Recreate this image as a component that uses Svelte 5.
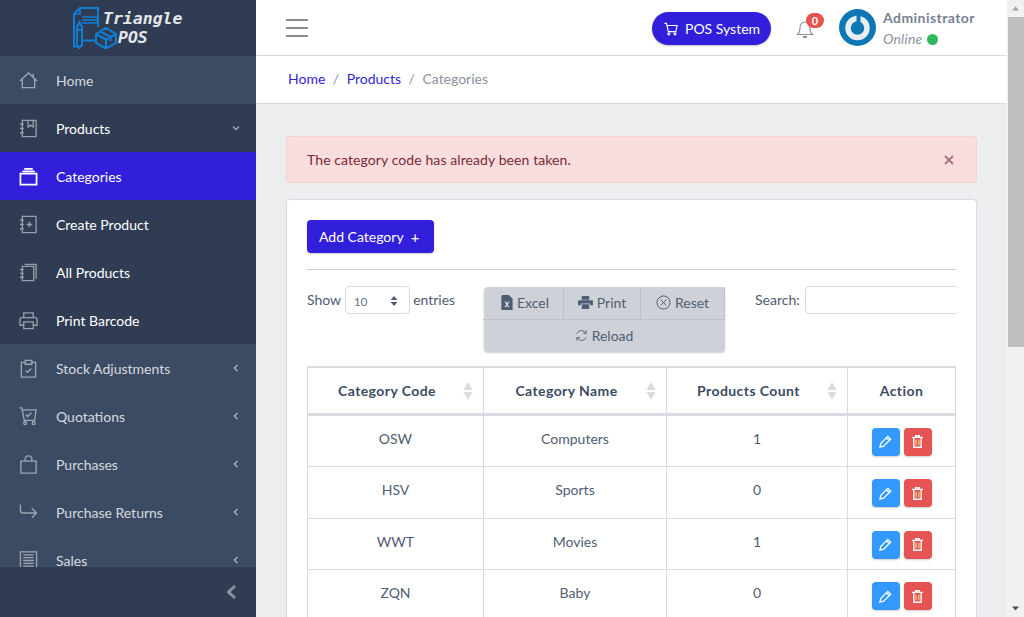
<script>
  const storeItems = [
    { name: "Stock Adjustments", icon: "clipboard" },
    { name: "Quotations", icon: "cart" },
    { name: "Purchases", icon: "bag" },
    { name: "Purchase Returns", icon: "return" },
    { name: "Sales", icon: "sales" },
  ];
  const productItems = [
    { name: "Categories", icon: "tray", active: true },
    { name: "Create Product", icon: "bookPlus" },
    { name: "All Products", icon: "books" },
    { name: "Print Barcode", icon: "print" },
  ];
  const columns = ["Category Code", "Category Name", "Products Count"];
  const rows = [
    { code: "OSW", name: "Computers", count: 1 },
    { code: "HSV", name: "Sports", count: 0 },
    { code: "WWT", name: "Movies", count: 1 },
    { code: "ZQN", name: "Baby", count: 0 },
  ];
</script>

{#snippet navIcon(kind)}
  <svg class="nav-icon" viewBox="0 0 20 20" fill="none" stroke="currentColor" stroke-width="1.400">
    {#if kind === "home"}
      <path d="M1 10.500 10 2l9 8.500M3.500 8.500v9h13v-9M15 3v3" />
    {:else if kind === "book"}
      <path d="M3.500 1.500h14.500v17H3.500zM1 5.500h4M1 10h4M1 14.500h4M9.500 1.500v7l2.700-2 2.800 2v-7" />
    {:else if kind === "tray"}
      <path d="M1.500 7h17v11.500h-17zM3.500 4.500h13M5.500 2h9" stroke-width="1.800" />
    {:else if kind === "bookPlus"}
      <path d="M3.500 1.500h14.500v17H3.500zM1 5.500h4M1 10h4M1 14.500h4M8 10h6M11 7v6" />
    {:else if kind === "books"}
      <path d="M3.500 3.500h12v15h-12zM1 7h4M1 11h4M1 15h4M6 1.500h12v15" />
    {:else if kind === "print"}
      <path d="M5 7V2h10v5M5 15H1V9q0-2 2-2h14q2 0 2 2v6h-4M5 11.500h10V18.500H5z" />
    {:else if kind === "clipboard"}
      <path d="M6 3.500H2.500V19h15V3.500H14M6.500 1.500h7v4h-7zM7 12l2 2 4-4" />
    {:else if kind === "cart"}
      <path d="M0.500 1h2.500L5.500 14h11l1.500-11H4M7 8l2 2 4-4" />
      <circle cx="6.500" cy="17" r="1.500" /><circle cx="15.500" cy="17" r="1.500" />
    {:else if kind === "bag"}
      <path d="M2 6.500h16v12.500H2zM6.500 6.500V4q0-3 3.500-3t3.500 3v2.500" />
    {:else if kind === "return"}
      <path d="M1.500 1.500v6q0 3 3 3h14M13.500 5.500l5 5-5 5" />
    {:else if kind === "sales"}
      <path d="M1.500 1h17v18h-17zM4.500 4h11M4.500 7h11M4.500 10h11M4.500 13h11M4.500 16h11" />
    {/if}
  </svg>
{/snippet}

{#snippet navRow(item)}
  <a class="nav-link" class:active={item.active}>
    {@render navIcon(item.icon)}
    <span>{item.name}</span>
    {#if item.chevron}
      <svg class="chevron" viewBox="0 0 8 8" fill="none" stroke="currentColor" stroke-width="1.600">
        {#if item.chevron === "down"}<path d="M1 2.500 4 5.500 7 2.500" />{:else}<path d="M5.500 1 2.500 4 5.500 7" />{/if}
      </svg>
    {/if}
  </a>
{/snippet}

<div class="shell">
  <aside class="sidebar">
    <div class="brand">
      <svg class="brand-mark" viewBox="0 0 44 42" fill="none" stroke="#0f7fd4" stroke-width="2">
        <path d="M25 20V1H7L1 7v32.500h4M10 33.500h12" />
        <path d="M7 1v6H1M9 10h16M9 13h16M9 16h16" stroke-width="1.500" />
        <path d="M4 20l2.500-5L9 20v18l-2.500 3L4 38zM4 23h5" />
        <path d="M23 27l10-6 10 6v9l-10 5.500L23 36zM23 27l10 5.500L43 27M33 32.500v9M27.500 24.500l10 5.500v4" />
      </svg>
      <div class="brand-text"><div>Triangle</div><div class="pos">POS</div></div>
    </div>
    <nav class="nav">
      <div class="home">{@render navRow({ name: "Home", icon: "home" })}</div>
      <div class="group">
        {@render navRow({ name: "Products", icon: "book", chevron: "down" })}
        {#each productItems as item}
          {@render navRow(item)}
        {/each}
      </div>
      {#each storeItems as item}
        {@render navRow({ ...item, chevron: "left" })}
      {/each}
    </nav>
    <div class="toggler">
      <svg viewBox="0 0 12 16" width="12" height="16" fill="none" stroke="#8a93a2" stroke-width="3"><path d="M10 2 3.500 8 10 14" /></svg>
    </div>
  </aside>

  <div class="main">
    <header class="header">
      <div class="topbar">
        <button class="burger" aria-label="Menu"><i></i><i></i><i></i></button>
        <div class="top-right">
          <a class="pos-btn">
            <svg viewBox="0 0 16 16" width="14" height="14" fill="none" stroke="#fff" stroke-width="1.300">
              <path d="M.5 1.500h2.300L5 11h8.500L15 4H3.500" /><circle cx="5.500" cy="13.500" r="1.200" /><circle cx="12.500" cy="13.500" r="1.200" />
            </svg>
            POS System
          </a>
          <div class="bell">
            <svg viewBox="0 0 20 22" width="20" height="22" fill="none" stroke="#8a8f99" stroke-width="1.100">
              <path d="M2.500 16.500q2.500-2 2.500-6.500 0-6 5-6t5 6q0 4.500 2.500 6.500z" /><path d="M8 19h4" stroke-width="2" />
            </svg>
            <span class="badge">0</span>
          </div>
          <div class="user">
            <svg class="avatar" viewBox="0 0 37 37">
              <circle cx="18.500" cy="18.500" r="18.500" fill="#0e78b6" />
              <circle cx="18.500" cy="19" r="9.500" fill="none" stroke="#e8eef2" stroke-width="5.500" />
              <path d="M19.500 6v13" stroke="#0e78b6" stroke-width="4" />
            </svg>
            <div class="user-text">
              <strong>Administrator</strong>
              <em>Online <i class="dot"></i></em>
            </div>
          </div>
        </div>
      </div>
      <ol class="breadcrumb">
        <li><a>Home</a></li>
        <li class="sep">/</li>
        <li><a>Products</a></li>
        <li class="sep">/</li>
        <li class="current">Categories</li>
      </ol>
    </header>

    <main class="content">
      <div class="alert">
        <span>The category code has already been taken.</span>
        <svg viewBox="0 0 10 10" width="10" height="10" stroke="#a5757b" stroke-width="1.800"><path d="M1 1l8 8M9 1 1 9" /></svg>
      </div>
      <section class="card">
        <a class="add-btn">Add Category <span class="plus">+</span></a>
        <hr />
        <div class="table-wrap">
          <div class="filters">
            <label class="length">Show <span class="select">10
              <svg viewBox="0 0 8 12" width="8" height="12" fill="#4f5d73"><path d="M4 1l3.500 4h-7zM4 11 .5 7h7z" /></svg>
            </span> entries</label>
            <div class="dt-buttons">
              <a class="dt-btn excel">
                <svg viewBox="0 0 12 16" width="12" height="15"><path d="M1 0h7l4 4v12H0V1z" fill="#4f5d73" /><path d="M4 7l4 6M8 7l-4 6" stroke="#dfe2e6" stroke-width="1.300" /></svg>
                Excel
              </a>
              <a class="dt-btn">
                <svg viewBox="0 0 16 14" width="15" height="13" fill="#4f5d73"><path d="M4 0h8v4H4zM1 4.500h14q1 0 1 1V10h-3V8H3v2H0V5.500q0-1 1-1zM4 9h8v5H4z" /></svg>
                Print
              </a>
              <a class="dt-btn">
                <svg viewBox="0 0 16 16" width="15" height="15" fill="none" stroke="#4f5d73" stroke-width="1"><circle cx="8" cy="8" r="7" /><path d="M5 5l6 6M11 5l-6 6" /></svg>
                Reset
              </a>
              <a class="dt-btn reload">
                <svg viewBox="0 0 14 14" width="13" height="13" fill="none" stroke="#4f5d73" stroke-width="1"><path d="M2 5a5.200 5.200 0 0 1 9.500-.5M12 9a5.200 5.200 0 0 1-9.500.5" /><path d="M12 1.500v3.200H8.800M2 12.500V9.300h3.200" /></svg>
                Reload
              </a>
            </div>
            <label class="search">Search: <span class="search-input"></span></label>
          </div>
          <table>
            <thead>
              <tr>
                {#each columns as col}
                  <th class="sortable">{col}
                    <svg class="sort" viewBox="0 0 10 18" width="10" height="18" fill="#d8dbe0"><path d="M5 0l4.500 8h-9zM5 18 .5 10h9z" /></svg>
                  </th>
                {/each}
                <th>Action</th>
              </tr>
            </thead>
            <tbody>
              {#each rows as row}
                <tr>
                  <td>{row.code}</td>
                  <td>{row.name}</td>
                  <td>{row.count}</td>
                  <td class="actions">
                    <div class="action-btns">
                      <button class="act edit" aria-label="Edit">
                        <svg viewBox="0 0 14 14" width="13" height="13" fill="none" stroke="#fff" stroke-width="1.400"><path d="M1 13l1-4 7.500-7.500 3 3L5 12zM8 3l3 3" /></svg>
                      </button>
                      <button class="act del" aria-label="Delete">
                        <svg viewBox="0 0 12 14" width="11" height="13" fill="none" stroke="#fff" stroke-width="1.500"><path d="M0 2.500h12M4 2.500V.7h4v1.800M2 2.500V13.300h8V2.500" /><path d="M4.500 5v6M7.500 5v6" stroke="#f6c37d" /></svg>
                      </button>
                    </div>
                  </td>
                </tr>
              {/each}
            </tbody>
          </table>
        </div>
      </section>
    </main>
  </div>

  <div class="scrollbar">
    <svg viewBox="0 0 17 17" width="17" height="17"><path d="M5 10.500 8.500 6.500 12 10.500z" fill="#a3a3a3" /></svg>
    <div class="thumb"></div>
    <div class="track"></div>
    <svg viewBox="0 0 17 17" width="17" height="17"><path d="M5 6.500 8.500 10.500 12 6.500z" fill="#505050" /></svg>
  </div>
</div>

<style>
  :global(body) {
    margin: 0;
    overflow: hidden;
    font-family: Lato, "Noto Sans", sans-serif;
    font-size: 14px;
    color: #4f5d73;
  }
  a { text-decoration: none; }

  .shell {
    display: flex;
    width: 1024px;
    height: 617px;
    overflow: hidden;
    background: #ebedef;
  }

  .sidebar {
    flex: 0 0 256px;
    display: flex;
    flex-direction: column;
    background: #3c4b64;
  }
  .brand {
    flex: 0 0 56px;
    background: #303c54;
    display: flex;
    align-items: flex-start;
    padding-left: 73px;
    box-sizing: border-box;
  }
  .brand-mark { flex: none; width: 44px; height: 42px; margin-top: 7px; }
  .brand-text {
    margin: 9px 0 0 -14px;
    font: italic bold 16.500px/19px "DejaVu Sans Mono", monospace;
    color: #e4e7ea;
    position: relative;
  }
  .pos { margin-left: 15px; }
  .nav { flex: 1; overflow: hidden; }
  .nav-link {
    display: flex;
    align-items: center;
    height: 48px;
    padding: 0 16px 0 19px;
    color: rgba(255, 255, 255, 0.8);
  }
  .nav-link span { flex: 1; margin-left: 18px; }
  .nav-icon { width: 19px; height: 19px; color: rgba(255, 255, 255, 0.5); }
  .chevron { width: 8px; height: 8px; color: rgba(255, 255, 255, 0.5); margin-right: 0; }
  .group { background: #303c54; }
  .group .nav-link { color: #fff; }
  .nav-link.active { background: #321fdb; color: #fff; }
  .nav-link.active .nav-icon { color: #fff; }
  .toggler {
    flex: 0 0 50px;
    background: #303c54;
    display: flex;
    align-items: center;
    justify-content: flex-end;
    padding-right: 19px;
    box-sizing: border-box;
  }

  .main { flex: 1; min-width: 0; overflow: hidden; }
  .header { background: #fff; border-bottom: 1px solid #d8dbe0; }
  .topbar {
    height: 55px;
    border-bottom: 1px solid #d8dbe0;
    display: flex;
    align-items: center;
    justify-content: space-between;
    padding: 0 32px 0 30px;
  }
  .burger {
    width: 22px;
    padding: 0;
    border: 0;
    background: none;
    display: flex;
    flex-direction: column;
    gap: 6px;
  }
  .burger i { height: 2px; background: #8a8a94; display: block; }
  .top-right { display: flex; align-items: center; }
  .pos-btn {
    display: flex;
    align-items: center;
    gap: 7px;
    height: 33px;
    width: 119px;
    margin-top: 2px;
    box-sizing: border-box;
    padding-left: 12px;
    border-radius: 17px;
    background: #321fdb;
    color: #fff;
    box-shadow: 0 1px 2px rgba(0, 0, 0, 0.25);
  }
  .bell { position: relative; width: 20px; height: 22px; margin: 3px 0 0 24px; }
  .badge {
    position: absolute;
    left: 11px;
    top: -5px;
    min-width: 18px;
    height: 15px;
    border-radius: 8px;
    background: #e55353;
    color: #fff;
    font-size: 11px;
    font-weight: 700;
    line-height: 15px;
    text-align: center;
  }
  .user { display: flex; align-items: center; margin-left: 24px; }
  .avatar { width: 37px; height: 37px; }
  .user-text { margin-left: 7px; display: flex; flex-direction: column; gap: 4px; margin-top: 1px; }
  .user-text strong { color: #768192; font-size: 14px; letter-spacing: 0.45px; }
  .user-text em { color: #8a93a2; font-size: 14px; letter-spacing: 0.2px; }
  .dot {
    display: inline-block;
    width: 11px;
    height: 11px;
    border-radius: 50%;
    background: #2eb85c;
    vertical-align: -1px;
    margin-left: 1px;
  }
  .breadcrumb {
    margin: 0;
    padding: 0 32px 2px;
    height: 47px;
    box-sizing: border-box;
    list-style: none;
    display: flex;
    align-items: center;
    gap: 7.500px;
  }
  .breadcrumb a { color: #321fdb; }
  .breadcrumb .sep, .breadcrumb .current { color: #8a93a2; }

  .content { padding: 32px 30px 0; }
  .alert {
    height: 47px;
    box-sizing: border-box;
    border: 1px solid #f8cfcf;
    border-radius: 4px;
    background: #fadddd;
    color: #772b35;
    padding: 0 22px 0 20px;
    display: flex;
    align-items: center;
    justify-content: space-between;
    margin-bottom: 16px;
    letter-spacing: 0.09px;
  }
  .card {
    background: #fff;
    border: 1px solid #d8dbe0;
    border-radius: 4px;
    padding: 20px;
  }
  .add-btn {
    display: inline-flex;
    align-items: center;
    height: 33px;
    width: 127px;
    box-sizing: border-box;
    padding: 0 12px;
    background: #321fdb;
    color: #fff;
    border-radius: 4px;
    box-shadow: 0 1px 2px rgba(0, 0, 0, 0.2);
    white-space: pre;
  }
  .plus { margin-left: 4px; font-size: 15px; }
  hr { border: 0; border-top: 1px solid #c9ccd1; margin: 16px 0; }

  .table-wrap { overflow: hidden; }
  .filters {
    display: grid;
    grid-template-columns: 177px 241px 1fr;
    align-items: start;
    height: 80px;
  }
  .length { display: flex; align-items: flex-start; gap: 3.500px; line-height: 27px; }
  .select {
    width: 65px;
    height: 28px;
    box-sizing: border-box;
    border: 1px solid #d8dbe0;
    border-radius: 4px;
    display: flex;
    align-items: center;
    justify-content: space-between;
    padding: 2px 11px 0 8px;
    font-size: 12px;
    color: #6b7687;
  }
  .dt-buttons {
    display: grid;
    grid-template-columns: 80px 77px 84px;
    background: #ced2d8;
    border-radius: 4px;
    box-shadow: 0 1px 2px rgba(0, 0, 0, 0.2);
    width: 241px;
    margin-top: 1px;
  }
  .dt-btn {
    height: 32px;
    padding-bottom: 1px;
    display: flex;
    align-items: center;
    justify-content: center;
    gap: 4px;
    color: #4f5d73;
    border-right: 1px solid #bec3ca;
    box-sizing: border-box;
  }
  .excel { padding-left: 3px; }
  .reload { grid-column: 1 / -1; height: 33px; border-right: 0; border-top: 1px solid #bec3ca; margin-left: -1px; }
  .search { display: flex; align-items: flex-start; line-height: 27px; margin-left: 30px; gap: 5.500px; white-space: nowrap; }
  .search-input {
    flex: 0 0 190px;
    height: 28px;
    box-sizing: border-box;
    border: 1px solid #d8dbe0;
    border-radius: 4px;
  }

  table { width: 648px; table-layout: fixed; border-collapse: collapse; }
  th, td { border: 1px solid #d8dbe0; text-align: center; padding: 0; box-sizing: border-box; }
  th:nth-child(1) { width: 176px; }
  th:nth-child(2) { width: 183px; }
  th:nth-child(3) { width: 181px; }
  th:nth-child(4) { width: 108px; }
  th {
    height: 47px;
    color: #3c4b64;
    font-weight: 700;
    border-top-width: 2px;
    border-bottom-width: 3px;
    position: relative;
    letter-spacing: 0.42px;
  }
  .sortable { padding-right: 17px; }
  .sort { position: absolute; right: 10px; top: 14px; }
  td { height: 51.500px; vertical-align: top; padding-top: 14px; }
  tbody tr:first-child td { height: 52.500px; }
  td.actions { padding-top: 12px; }
  .action-btns { display: flex; justify-content: center; gap: 4px; }
  .act {
    width: 28px;
    height: 28px;
    padding: 0;
    border: 0;
    border-radius: 4px;
    display: flex;
    align-items: center;
    justify-content: center;
    box-shadow: 0 1px 2px rgba(0, 0, 0, 0.2);
  }
  .edit { background: #39f; }
  .del { background: #e55353; }

  .scrollbar {
    flex: 0 0 17px;
    display: flex;
    flex-direction: column;
    background: #f1f1f1;
  }
  .thumb { height: 330px; margin-left: 1px; background: #bfbfbf; }
  .track { flex: 1; }
</style>
